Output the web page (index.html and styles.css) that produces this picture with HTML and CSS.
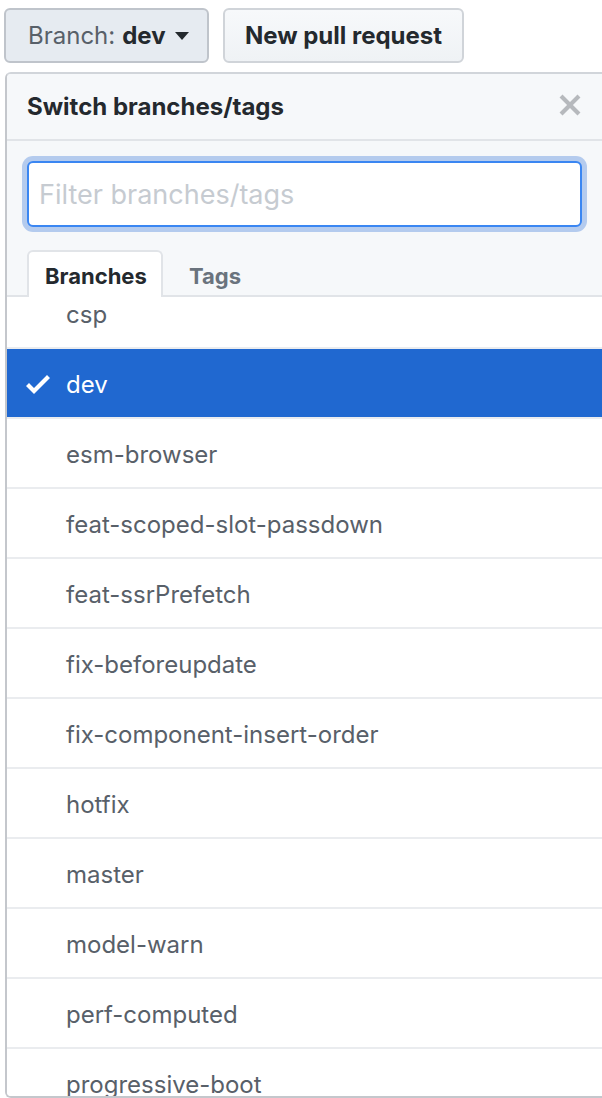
FILE: index.html
```html
<!DOCTYPE html>
<html lang="en">
<head>
<meta charset="utf-8">
<title>Switch branches/tags</title>
<link rel="stylesheet" href="styles.css">
</head>
<body>
<div class="toolbar">
  <button class="btn btn-branch"><span class="btn-label">Branch:</span> <span class="btn-value">dev</span><span class="caret"></span></button>
  <button class="btn btn-pr">New pull request</button>
</div>
<div class="menu">
  <div class="menu-header">
    <span class="menu-title">Switch branches/tags</span>
    <svg class="menu-close" width="24" height="32" viewBox="0 0 12 16" aria-hidden="true"><path fill="currentColor" d="M7.48 8l3.75 3.750-1.48 1.48L6 9.48l-3.75 3.75-1.48-1.48L4.52 8 .77 4.25l1.48-1.48L6 6.52l3.75-3.75 1.48 1.48L7.48 8z"/></svg>
  </div>
  <div class="menu-filters">
    <div class="filter-wrap">
      <input class="filter-input" type="text" placeholder="Filter branches/tags">
    </div>
    <div class="tabs">
      <span class="tab tab-selected">Branches</span>
      <span class="tab">Tags</span>
    </div>
  </div>
  <div class="menu-list">
    <div class="menu-list-inner">
      <div class="item">csp</div>
      <div class="item item-selected"><svg class="check" width="24" height="32" viewBox="0 0 12 16" aria-hidden="true"><path fill="currentColor" d="M12 5l-8 8-4-4 1.5-1.5L4 10l6.5-6.5L12 5z"/></svg>dev</div>
      <div class="item">esm-browser</div>
      <div class="item">feat-scoped-slot-passdown</div>
      <div class="item">feat-ssrPrefetch</div>
      <div class="item">fix-beforeupdate</div>
      <div class="item">fix-component-insert-order</div>
      <div class="item">hotfix</div>
      <div class="item">master</div>
      <div class="item">model-warn</div>
      <div class="item">perf-computed</div>
      <div class="item">progressive-boot</div>
    </div>
  </div>
</div>
</body>
</html>
```
FILE: styles.css
```css
html, body {
  margin: 0;
  padding: 0;
  background: #ffffff;
  overflow: hidden;
}
body {
  font-family: Inter, "Liberation Sans", Arial, sans-serif;
  color: #24292e;
  width: 602px;
  height: 1098px;
}
.toolbar {
  display: flex;
  gap: 14px;
  padding: 8px 0 0 4px;
}
.btn {
  box-sizing: border-box;
  height: 55px;
  display: flex;
  align-items: center;
  border-radius: 6px;
  border: 2px solid #c9cdd2;
  font-family: inherit;
  font-size: 24px;
  font-weight: 700;
  color: #24292e;
  padding: 0 22px;
  margin: 0;
  white-space: nowrap;
}
.btn-branch {
  background: #e6ebf1;
  border-color: #bfc4cb;
  width: 205px;
  padding-left: 22px;
}
.btn-label {
  font-weight: 400;
  color: #586069;
}
.btn-value {
  margin-left: 7px;
}
.caret {
  display: inline-block;
  width: 0;
  height: 0;
  margin-left: 9px;
  border-top: 8px solid #24292e;
  border-left: 7.5px solid transparent;
  border-right: 7.5px solid transparent;
}
.btn-pr {
  width: 241px;
  padding: 0;
  background: linear-gradient(#f7f9fb, #eff2f5);
  border-color: #d0d4d9;
  justify-content: center;
}
.menu {
  box-sizing: border-box;
  margin: 9px 0 0 5px;
  width: 610px;
  height: 1026px;
  border: 2px solid #d1d5da;
  border-left-color: #c4c7cc;
  border-bottom-color: #c4c7cc;
  border-radius: 6px 0 0 6px;
  overflow: hidden;
  display: flex;
  flex-direction: column;
  background: #ffffff;
}
.menu-header {
  flex: none;
  height: 65px;
  border-bottom: 2px solid #e1e4e8;
  background: #f6f8fa;
  display: flex;
  align-items: center;
  padding-left: 20px;
  position: relative;
}
.menu-title {
  font-size: 24px;
  font-weight: 700;
  color: #24292e;
}
.menu-close {
  position: absolute;
  left: 551px;
  top: 15px;
  color: #b6b9bd;
}
.menu-filters {
  flex: none;
  background: #f6f8fa;
  padding-top: 20px;
}
.filter-wrap {
  margin: 0 0 0 20px;
  width: 555px;
}
.filter-input {
  box-sizing: border-box;
  display: block;
  width: 555px;
  height: 66px;
  border: 2px solid #3a86f2;
  border-radius: 6px;
  box-shadow: 0 0 0 5px #b4cbee;
  background: #ffffff;
  font-family: inherit;
  font-size: 27px;
  padding: 0 10px;
  outline: none;
  color: #24292e;
}
.filter-input::placeholder {
  color: #c6cbd1;
}
.tabs {
  margin-top: 23px;
  padding-left: 20px;
  display: flex;
  align-items: flex-end;
  border-bottom: 2px solid #e1e4e8;
  height: 45px;
}
.tab {
  box-sizing: border-box;
  height: 47px;
  margin-bottom: -2px;
  padding: 0 18px 0 24px;
  display: flex;
  align-items: center;
  padding-top: 3px;
  font-size: 22px;
  font-weight: 700;
  color: #6a737d;
  border: 2px solid transparent;
  border-bottom: 0;
  border-radius: 6px 6px 0 0;
}
.tab-selected {
  width: 136px;
  padding-left: 16px;
  padding-right: 0;
  background: #ffffff;
  border-color: #e1e4e8;
  color: #24292e;
}
.menu-list {
  flex: 1;
  overflow: hidden;
  background: #ffffff;
}
.menu-list-inner {
  margin-top: -18px;
}
.item {
  box-sizing: border-box;
  height: 70px;
  border-bottom: 2px solid #eaecef;
  display: flex;
  align-items: center;
  padding-left: 59px;
  padding-top: 2px;
  font-size: 24px;
  color: #586069;
}
.item-selected {
  background: #2068d0;
  color: #ffffff;
  padding-left: 19px;
}
.check {
  margin-right: 16px;
  color: #ffffff;
}
```
